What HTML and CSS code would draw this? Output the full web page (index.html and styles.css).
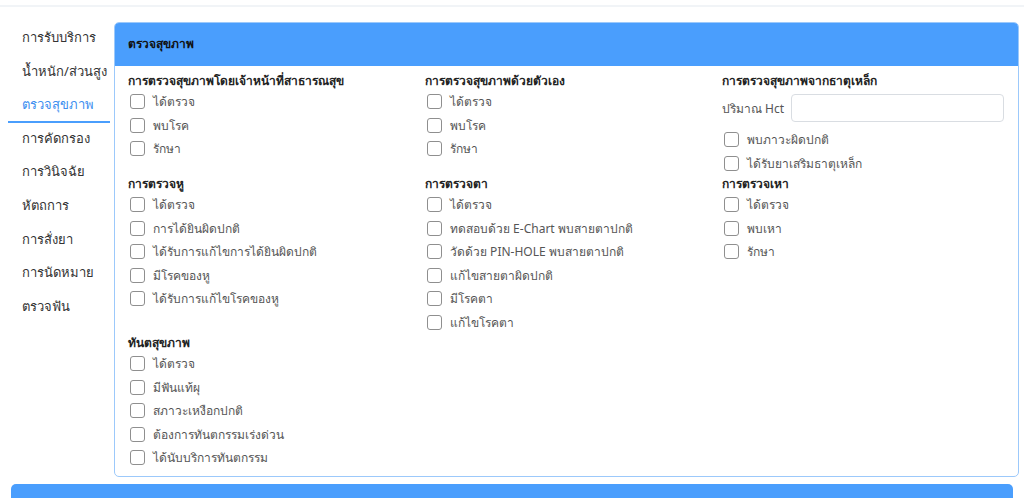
FILE: index.html
```html
<!DOCTYPE html>
<html lang="th">
<head>
<meta charset="utf-8">
<title>ตรวจสุขภาพ</title>
<link rel="stylesheet" href="styles.css">
</head>
<body>
<div class="topbar"></div>
<div class="main">
  <nav class="sidebar">
    <div class="nav-item">การรับบริการ</div>
    <div class="nav-item">น้ำหนัก/ส่วนสูง</div>
    <div class="nav-item active">ตรวจสุขภาพ</div>
    <div class="nav-item">การคัดกรอง</div>
    <div class="nav-item">การวินิจฉัย</div>
    <div class="nav-item">หัตถการ</div>
    <div class="nav-item">การสั่งยา</div>
    <div class="nav-item">การนัดหมาย</div>
    <div class="nav-item">ตรวจฟัน</div>
  </nav>
  <section class="card">
    <header class="card-head">ตรวจสุขภาพ</header>
    <div class="card-body">
      <div class="sec">
        <div class="sec-title">การตรวจสุขภาพโดยเจ้าหน้าที่สาธารณสุข</div>
        <label class="chk"><span class="box"></span>ได้ตรวจ</label>
        <label class="chk"><span class="box"></span>พบโรค</label>
        <label class="chk"><span class="box"></span>รักษา</label>
      </div>
      <div class="sec">
        <div class="sec-title">การตรวจสุขภาพด้วยตัวเอง</div>
        <label class="chk"><span class="box"></span>ได้ตรวจ</label>
        <label class="chk"><span class="box"></span>พบโรค</label>
        <label class="chk"><span class="box"></span>รักษา</label>
      </div>
      <div class="sec">
        <div class="sec-title">การตรวจสุขภาพจากธาตุเหล็ก</div>
        <div class="field">
          <span class="field-label">ปริมาณ Hct</span>
          <input class="input" type="text">
        </div>
        <label class="chk"><span class="box"></span>พบภาวะผิดปกติ</label>
        <label class="chk"><span class="box"></span>ได้รับยาเสริมธาตุเหล็ก</label>
      </div>

      <div class="sec">
        <div class="sec-title">การตรวจหู</div>
        <label class="chk"><span class="box"></span>ได้ตรวจ</label>
        <label class="chk"><span class="box"></span>การได้ยินผิดปกติ</label>
        <label class="chk"><span class="box"></span>ได้รับการแก้ไขการได้ยินผิดปกติ</label>
        <label class="chk"><span class="box"></span>มีโรคของหู</label>
        <label class="chk"><span class="box"></span>ได้รับการแก้ไขโรคของหู</label>
      </div>
      <div class="sec">
        <div class="sec-title">การตรวจตา</div>
        <label class="chk"><span class="box"></span>ได้ตรวจ</label>
        <label class="chk"><span class="box"></span>ทดสอบด้วย E-Chart พบสายตาปกติ</label>
        <label class="chk"><span class="box"></span>วัดด้วย PIN-HOLE พบสายตาปกติ</label>
        <label class="chk"><span class="box"></span>แก้ไขสายตาผิดปกติ</label>
        <label class="chk"><span class="box"></span>มีโรคตา</label>
        <label class="chk"><span class="box"></span>แก้ไขโรคตา</label>
      </div>
      <div class="sec">
        <div class="sec-title">การตรวจเหา</div>
        <label class="chk"><span class="box"></span>ได้ตรวจ</label>
        <label class="chk"><span class="box"></span>พบเหา</label>
        <label class="chk"><span class="box"></span>รักษา</label>
      </div>

      <div class="sec">
        <div class="sec-title">ทันตสุขภาพ</div>
        <label class="chk"><span class="box"></span>ได้ตรวจ</label>
        <label class="chk"><span class="box"></span>มีฟันแท้ผุ</label>
        <label class="chk"><span class="box"></span>สภาวะเหงือกปกติ</label>
        <label class="chk"><span class="box"></span>ต้องการทันตกรรมเร่งด่วน</label>
        <label class="chk"><span class="box"></span>ได้นับบริการทันตกรรม</label>
      </div>
    </div>
  </section>
</div>
<div class="bottom-bar"></div>
</body>
</html>
```
FILE: styles.css
```css
* { box-sizing: border-box; }
html, body { margin: 0; padding: 0; }
body {
  font-family: "Noto Sans", "DejaVu Sans", sans-serif;
  font-size: 12px;
  color: #555;
  background: #fff;
  overflow: hidden;
}
.topbar {
  height: 7px;
  border-bottom: 2px solid #f1f4f7;
}
.main {
  display: flex;
  align-items: flex-start;
  padding: 15px 5px 0 8px;
  gap: 4px;
}
.sidebar {
  width: 102px;
  flex: none;
  display: flex;
  flex-direction: column;
}
.nav-item {
  height: 33.6px;
  line-height: 31px;
  padding-left: 14px;
  font-size: 13px;
  color: #333;
  white-space: nowrap;
}
.nav-item.active {
  color: #3d8ff0;
  border-bottom: 2px solid #4a9efd;
}
.card {
  flex: 1;
  border: 1px solid #9cc9fb;
  border-radius: 5px;
  overflow: hidden;
  height: 455px;
}
.card-head {
  background: #4a9efd;
  height: 43px;
  line-height: 42px;
  padding-left: 13px;
  font-weight: bold;
  font-size: 12px;
  color: #111;
}
.card-body {
  display: grid;
  grid-template-columns: 297px 297px 297px;
  padding: 6px 0 6px 13px;
}
.sec { padding-right: 15px; }
.sec-title {
  height: 18px;
  line-height: 18px;
  font-weight: bold;
  color: #222;
  font-size: 12px;
  white-space: nowrap;
}
.chk {
  display: flex;
  align-items: center;
  height: 23.5px;
  white-space: nowrap;
}
.box {
  width: 15px;
  height: 15px;
  margin-left: 2px;
  margin-right: 8px;
  border: 1px solid #8f8f8f;
  border-radius: 3px;
  background: #fff;
  flex: none;
}
.field {
  display: flex;
  align-items: center;
  margin: 4px 0 6px;
}
.field-label {
  width: 69px;
  flex: none;
}
.input {
  flex: 1;
  height: 28px;
  border: 1px solid #d9dde2;
  border-radius: 4px;
  font: inherit;
  padding: 0 8px;
}
.bottom-bar {
  margin: 7px 11px 0 11px;
  height: 30px;
  background: #4a9efd;
  border-radius: 5px 5px 0 0;
}
```
